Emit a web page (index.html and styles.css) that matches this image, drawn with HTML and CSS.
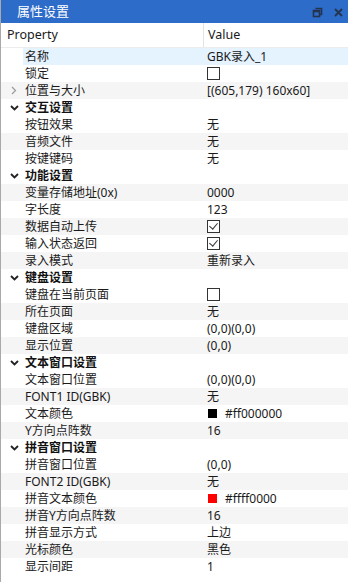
FILE: index.html
```html
<!DOCTYPE html>
<html lang="zh-CN">
<head>
  <meta charset="UTF-8" />
  <meta name="viewport" content="width=device-width, initial-scale=1.0"/>
  <title>属性设置</title>
  <link rel="stylesheet" href="styles.css">
</head>
<body>

<div class="panel">
  <div class="titlebar">
    <span class="title">属性设置</span>
    <div class="title-buttons">
      <svg class="tb-icon" width="11" height="11" viewBox="0 0 11 11">
        <path d="M3.5 1.5h6v6h-2" fill="none" stroke="#24344f" stroke-width="1.6"/>
        <rect x="1.5" y="3.5" width="6" height="6" fill="none" stroke="#24344f" stroke-width="1.6"/>
        <path d="M1.5 4.5h6" stroke="#24344f" stroke-width="1.6"/>
      </svg>
      <svg class="tb-icon" width="11" height="11" viewBox="0 0 11 11">
        <path d="M2 2l7 7M9 2l-7 7" stroke="#24344f" stroke-width="1.8"/>
      </svg>
    </div>
  </div>

  <div class="header">
    <div class="hcell">Property</div>
    <div class="hcell value">Value</div>
  </div>

  <div class="rows">
    <div class="row selected"><span class="ind"></span><span class="name">名称</span><span class="val">GBK录入_1</span></div>
    <div class="row"><span class="ind"></span><span class="name">锁定</span><span class="val"><span class="check"></span></span></div>
    <div class="row alt"><span class="ind"><svg width="6" height="9" viewBox="0 0 6 9"><path d="M1 1l3.5 3.5L1 8" fill="none" stroke="#9a9a9a" stroke-width="1.2"/></svg></span><span class="name">位置与大小</span><span class="val">[(605,179) 160x60]</span></div>

    <div class="row group"><span class="ind"><svg width="9" height="6" viewBox="0 0 9 6"><path d="M1 1l3.5 3.5L8 1" fill="none" stroke="#222" stroke-width="1.8"/></svg></span><span class="name">交互设置</span><span class="val"></span></div>
    <div class="row"><span class="ind"></span><span class="name">按钮效果</span><span class="val">无</span></div>
    <div class="row alt"><span class="ind"></span><span class="name">音频文件</span><span class="val">无</span></div>
    <div class="row"><span class="ind"></span><span class="name">按键键码</span><span class="val">无</span></div>

    <div class="row group"><span class="ind"><svg width="9" height="6" viewBox="0 0 9 6"><path d="M1 1l3.5 3.5L8 1" fill="none" stroke="#222" stroke-width="1.8"/></svg></span><span class="name">功能设置</span><span class="val"></span></div>
    <div class="row alt"><span class="ind"></span><span class="name">变量存储地址(0x)</span><span class="val">0000</span></div>
    <div class="row"><span class="ind"></span><span class="name">字长度</span><span class="val">123</span></div>
    <div class="row alt"><span class="ind"></span><span class="name">数据自动上传</span><span class="val"><span class="check on"></span></span></div>
    <div class="row"><span class="ind"></span><span class="name">输入状态返回</span><span class="val"><span class="check on"></span></span></div>
    <div class="row alt"><span class="ind"></span><span class="name">录入模式</span><span class="val">重新录入</span></div>

    <div class="row group"><span class="ind"><svg width="9" height="6" viewBox="0 0 9 6"><path d="M1 1l3.5 3.5L8 1" fill="none" stroke="#222" stroke-width="1.8"/></svg></span><span class="name">键盘设置</span><span class="val"></span></div>
    <div class="row"><span class="ind"></span><span class="name">键盘在当前页面</span><span class="val"><span class="check"></span></span></div>
    <div class="row alt"><span class="ind"></span><span class="name">所在页面</span><span class="val">无</span></div>
    <div class="row"><span class="ind"></span><span class="name">键盘区域</span><span class="val">(0,0)(0,0)</span></div>
    <div class="row alt"><span class="ind"></span><span class="name">显示位置</span><span class="val">(0,0)</span></div>

    <div class="row group"><span class="ind"><svg width="9" height="6" viewBox="0 0 9 6"><path d="M1 1l3.5 3.5L8 1" fill="none" stroke="#222" stroke-width="1.8"/></svg></span><span class="name">文本窗口设置</span><span class="val"></span></div>
    <div class="row"><span class="ind"></span><span class="name">文本窗口位置</span><span class="val">(0,0)(0,0)</span></div>
    <div class="row alt"><span class="ind"></span><span class="name">FONT1 ID(GBK)</span><span class="val">无</span></div>
    <div class="row"><span class="ind"></span><span class="name">文本颜色</span><span class="val"><span class="swatch black"></span>#ff000000</span></div>
    <div class="row alt"><span class="ind"></span><span class="name">Y方向点阵数</span><span class="val">16</span></div>

    <div class="row group"><span class="ind"><svg width="9" height="6" viewBox="0 0 9 6"><path d="M1 1l3.5 3.5L8 1" fill="none" stroke="#222" stroke-width="1.8"/></svg></span><span class="name">拼音窗口设置</span><span class="val"></span></div>
    <div class="row"><span class="ind"></span><span class="name">拼音窗口位置</span><span class="val">(0,0)</span></div>
    <div class="row alt"><span class="ind"></span><span class="name">FONT2 ID(GBK)</span><span class="val">无</span></div>
    <div class="row"><span class="ind"></span><span class="name">拼音文本颜色</span><span class="val"><span class="swatch red"></span>#ffff0000</span></div>
    <div class="row alt"><span class="ind"></span><span class="name">拼音Y方向点阵数</span><span class="val">16</span></div>
    <div class="row"><span class="ind"></span><span class="name">拼音显示方式</span><span class="val">上边</span></div>
    <div class="row alt"><span class="ind"></span><span class="name">光标颜色</span><span class="val">黑色</span></div>
    <div class="row"><span class="ind"></span><span class="name">显示间距</span><span class="val">1</span></div>
  </div>
</div>

</body>
</html>
```

FILE: styles.css
```css
body {
  margin: 0;
  font-family: 'Noto Sans', 'Noto Sans CJK SC', sans-serif;
  font-size: 12px;
  color: #1a1a1a;
  background: #fff;
}

.panel {
  width: 348px;
  height: 582px;
  box-sizing: border-box;
  border-left: 1px solid #a9a9a9;
  overflow: hidden;
  background: #fff;
}

.titlebar {
  height: 23px;
  background: #2d6cc8;
  display: flex;
  align-items: center;
  justify-content: space-between;
  padding: 0 4px 0 16px;
}

.title {
  color: #fff;
  font-size: 13px;
  line-height: 23px;
}

.title-buttons {
  display: flex;
  gap: 10px;
  align-items: center;
  margin-top: 2px;
}

.header {
  height: 25px;
  display: grid;
  grid-template-columns: 202px 1fr;
  border-bottom: 1px solid #ececec;
  box-sizing: border-box;
}

.hcell {
  padding-left: 6px;
  line-height: 24px;
  font-size: 12.5px;
}

.hcell.value {
  border-left: 1px solid #e3e3e3;
  padding-left: 4px;
}

.row {
  height: 17px;
  display: grid;
  grid-template-columns: 24px 178px 1fr;
  align-items: center;
  line-height: 17px;
}

.row.alt {
  background: #f5f5f5;
}

.row.selected .name,
.row.selected .val {
  background: #e5f3ff;
}

.row.selected .name {
  margin-left: -2px;
  padding-left: 2px;
}

.row.group .name {
  font-weight: bold;
  color: #111;
}

.ind {
  display: flex;
  align-items: center;
  justify-content: center;
  height: 17px;
  padding-left: 2px;
}

.name,
.val {
  height: 17px;
  white-space: nowrap;
}

.val {
  padding-left: 4px;
  display: flex;
  align-items: center;
}

.check {
  width: 11px;
  height: 11px;
  border: 1px solid #333;
  background: #fff;
  display: inline-block;
  position: relative;
}

.check.on::after {
  content: "";
  position: absolute;
  left: 3px;
  top: 0px;
  width: 4px;
  height: 7px;
  border-right: 1.3px solid #333;
  border-bottom: 1.3px solid #333;
  transform: rotate(40deg);
}

.swatch {
  width: 9px;
  height: 9px;
  display: inline-block;
  margin: 0 8px 0 1px;
}

.swatch.black {
  background: #000;
}

.swatch.red {
  background: #ff0000;
}
```
